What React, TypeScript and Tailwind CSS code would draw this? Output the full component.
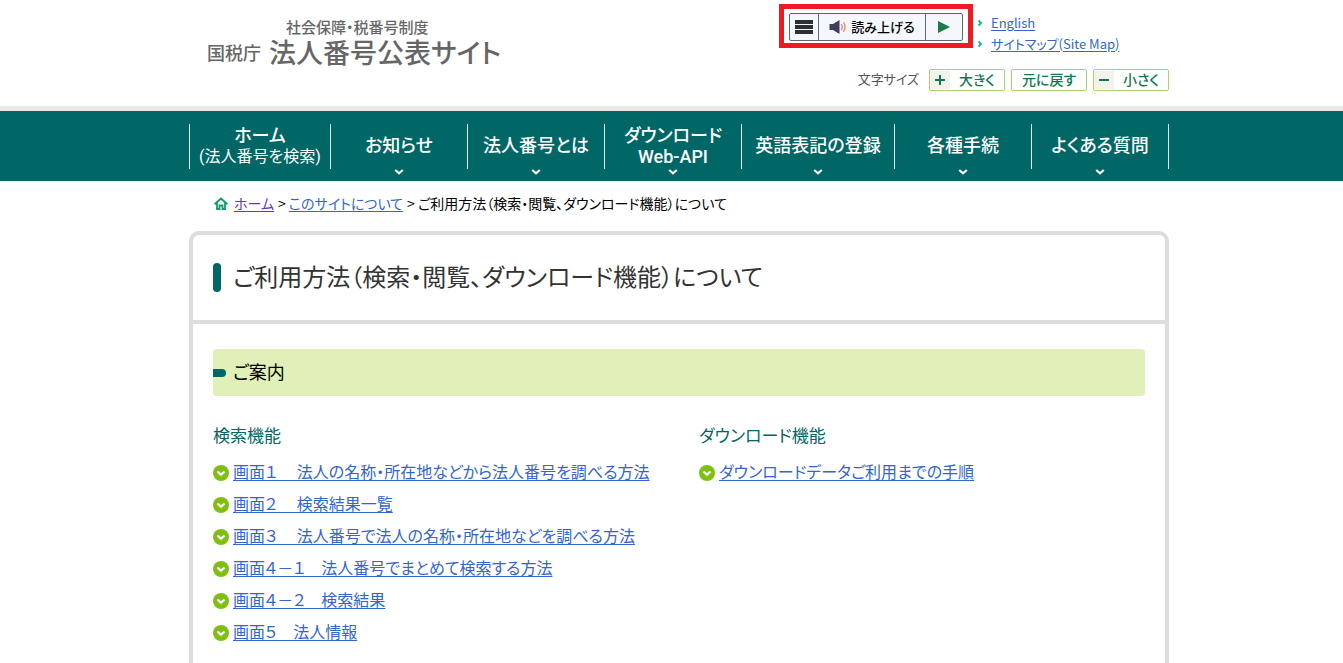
import React from "react";

const navItems: { lines: string[]; small?: string; menu: boolean }[] = [
  { lines: ["ホーム"], small: "(法人番号を検索)", menu: false },
  { lines: ["お知らせ"], menu: true },
  { lines: ["法人番号とは"], menu: true },
  { lines: ["ダウンロード", "Web-API"], menu: true },
  { lines: ["英語表記の登録"], menu: true },
  { lines: ["各種手続"], menu: true },
  { lines: ["よくある質問"], menu: true },
];

const searchLinks = [
  "画面１　 法人の名称・所在地などから法人番号を調べる方法",
  "画面２　 検索結果一覧",
  "画面３　 法人番号で法人の名称・所在地などを調べる方法",
  "画面４－１　法人番号でまとめて検索する方法",
  "画面４－２　検索結果",
  "画面５　法人情報",
];

const downloadLinks = ["ダウンロードデータご利用までの手順"];

function SpeakerIcon() {
  return (
    <svg width="18" height="16" viewBox="0 0 18 16" aria-hidden="true">
      <path d="M0.500 5h3.500L10.500 1v14L4 11H0.500z" fill="#3f3d5c" />
      <path d="M12.300 5q1.800 3 0 6M14.500 3.300q3 4.700 0 9.400" fill="none" stroke="#f0765a" strokeWidth="1.200" />
    </svg>
  );
}

function HomeIcon() {
  return (
    <svg width="14" height="13" viewBox="0 0 14 13" className="mt-px" aria-hidden="true">
      <path d="M0.600 7.200 7 1.600l6.400 5.600" fill="none" stroke="#0f9d63" strokeWidth="2" />
      <path d="M3 6v6h2.500V8.500h3V12H11V6" fill="none" stroke="#0f9d63" strokeWidth="1.800" />
    </svg>
  );
}

function BulletArrow() {
  return (
    <svg width="6" height="8" viewBox="0 0 6 8" className="shrink-0" aria-hidden="true">
      <path d="M1.500 1.500 4 4 1.500 6.500" fill="none" stroke="#1cb89a" strokeWidth="2" />
    </svg>
  );
}

function CircleChevron() {
  return (
    <svg width="16" height="16" viewBox="0 0 16 16" className="shrink-0" aria-hidden="true">
      <circle cx="8" cy="8" r="8" fill="#7fbf0f" />
      <path d="M4.500 6.500 8 9.800l3.500-3.300" fill="none" stroke="#fff" strokeWidth="2.200" />
    </svg>
  );
}

function LinkList({ title, items }: { title: string; items: string[] }) {
  return (
    <section>
      <h3 className="text-[17px] leading-6 text-[#006666]">{title}</h3>
      <ul className="mt-[10px]">
        {items.map((item) => (
          <li key={item} className="flex h-8 items-center gap-1">
            <CircleChevron />
            <a href="#" className="pb-1 text-base leading-5 whitespace-pre text-[#3366cc] underline underline-offset-2">
              {item}
            </a>
          </li>
        ))}
      </ul>
    </section>
  );
}

function SizeButton({ sign, label }: { sign?: string; label: string }) {
  return (
    <button
      type="button"
      className="flex h-[22px] w-[76px] items-center rounded-[2px] border border-[#a5d46a] bg-white text-sm leading-5 font-medium text-[#0f7a50]"
    >
      {sign && (
        <span className="flex h-[18px] w-5 items-center justify-center bg-[#f3f2ea]">
          <svg width="12" height="12" viewBox="0 0 12 12" aria-hidden="true">
            <path d={sign} stroke="#0f7a50" strokeWidth="2" />
          </svg>
        </span>
      )}
      <span className="flex-1 pb-[2px] text-center">{label}</span>
    </button>
  );
}

export default function App() {
  return (
    <div className="h-screen overflow-hidden bg-white font-['Noto_Sans_CJK_JP',sans-serif] text-black [font-feature-settings:'palt']">
      <header className="h-[106px] pl-[15px]">
        <div className="mx-auto flex max-w-[980px] justify-between">
          <a
            href="#"
            className="flex flex-col pt-[18px] pl-[18px] font-['Liberation_Sans','Noto_Sans_CJK_JP',sans-serif] font-medium text-[#666]"
          >
            <span className="pl-[79px] text-[15px] leading-5">社会保障・税番号制度</span>
            <span className="flex items-center gap-2">
              <span className="text-lg leading-8">国税庁</span>
              <span className="text-[27px] leading-8">法人番号公表サイト</span>
            </span>
          </a>
          <div className="flex w-[390px] flex-col pt-1">
            <div className="flex items-start gap-1">
              <div className="border-[5px] border-[#ed1c24] bg-white px-[5px] pt-1 pb-[2px]">
                <div className="box-content flex h-[26px] rounded-[2px] border border-[#5c6773] bg-[#f4f8fc]">
                  <button type="button" aria-label="メニュー" className="flex w-[29px] items-center justify-center border-r border-[#5c6773]">
                    <svg width="18" height="14" viewBox="0 0 18 14" aria-hidden="true">
                      <path d="M0 0h18v4H0zM0 5h18v4H0zM0 10h18v4H0z" fill="#2b2f36" />
                    </svg>
                  </button>
                  <button type="button" className="flex w-[107px] items-center justify-center gap-1 border-r border-[#5c6773] text-[13px] leading-5 font-medium">
                    <SpeakerIcon />
                    <span className="pb-px">読み上げる</span>
                  </button>
                  <button type="button" aria-label="再生" className="flex w-9 items-center justify-center">
                    <svg width="12" height="12" viewBox="0 0 12 12" aria-hidden="true">
                      <path d="M0 0l12 6-12 6z" fill="#1f7a45" />
                    </svg>
                  </button>
                </div>
              </div>
              <ul className="pt-2 text-[13px] leading-[21px] text-[#3366cc]">
                {["English", "サイトマップ(Site Map)"].map((label) => (
                  <li key={label} className="flex items-center gap-2">
                    <BulletArrow />
                    <a href="#" className="underline underline-offset-2">{label}</a>
                  </li>
                ))}
              </ul>
            </div>
            <div className="mt-[15px] flex items-center justify-end gap-[6px]">
              <span className="mr-1 pb-[2px] text-[13px] leading-5 text-[#555]">文字サイズ</span>
              <SizeButton sign="M1 6h10M6 1v10" label="大きく" />
              <SizeButton label="元に戻す" />
              <SizeButton sign="M1 6h10" label="小さく" />
            </div>
          </div>
        </div>
      </header>

      <nav className="border-t-[5px] border-[#eaeae2] bg-[#006666] pl-[15px] font-['Roboto','Noto_Sans_CJK_JP',sans-serif]">
        <ul className="mx-auto grid h-[70px] max-w-[980px] grid-cols-[142fr_137fr_137fr_137fr_153fr_137fr_137fr] pt-[13px] text-white">
          {navItems.map((item, i) => (
            <li
              key={item.lines[0]}
              className={`relative h-[45px] border-r border-[#e4e8e0] ${i === 0 ? "border-l" : ""}`}
            >
              <a href="#" className="flex h-full flex-col items-center justify-center pb-[2px] text-lg leading-[21px] font-medium">
                {item.lines.map((line) => (
                  <span key={line} className="whitespace-nowrap">{line}</span>
                ))}
                {item.small && <span className="text-base leading-[21px] font-normal whitespace-nowrap">{item.small}</span>}
              </a>
              {item.menu && (
                <svg width="10" height="6" viewBox="0 0 10 6" className="absolute top-full left-1/2 -translate-x-1/2" aria-hidden="true">
                  <path d="M1.200 1 5 4.300 8.800 1" fill="none" stroke="#fff" strokeWidth="2.200" />
                </svg>
              )}
            </li>
          ))}
        </ul>
      </nav>

      <div className="pl-[15px]">
        <main className="mx-auto max-w-[980px]">
          <ol className="flex items-center gap-1 pt-3 pl-[25px] text-sm leading-5">
            <li className="flex items-center gap-[6px]">
              <HomeIcon />
              <a href="#" className="text-[#6633cc] underline underline-offset-2">ホーム</a>
            </li>
            <li className="flex items-center gap-[3px]">
              <span>&gt;</span>
              <a href="#" className="text-[#3366cc] underline underline-offset-2">このサイトについて</a>
            </li>
            <li className="flex items-center gap-[3px]">
              <span>&gt;</span>
              <span>ご利用方法（検索・閲覧、ダウンロード機能）について</span>
            </li>
          </ol>

          <div className="mt-[18px] min-h-[500px] rounded-t-[10px] border-4 border-[#ddd]">
            <div className="flex items-center gap-3 border-b-4 border-[#ddd] px-5 py-[27px]">
              <span className="h-[29px] w-2 rounded-full bg-[#006666]" />
              <h1 className="pb-[3px] text-2xl leading-7 text-[#333]">ご利用方法（検索・閲覧、ダウンロード機能）について</h1>
            </div>
            <div className="px-5 pt-[25px]">
              <div className="flex h-[47px] items-center gap-[7px] rounded-[4px] bg-[#e0f0b8]">
                <span className="h-2 w-[13px] rounded-r-full bg-[#006666]" />
                <h2 className="pb-[3px] text-lg leading-6">ご案内</h2>
              </div>
              <div className="mt-[27px] grid grid-cols-2 gap-x-10">
                <LinkList title="検索機能" items={searchLinks} />
                <LinkList title="ダウンロード機能" items={downloadLinks} />
              </div>
            </div>
          </div>
        </main>
      </div>
    </div>
  );
}
